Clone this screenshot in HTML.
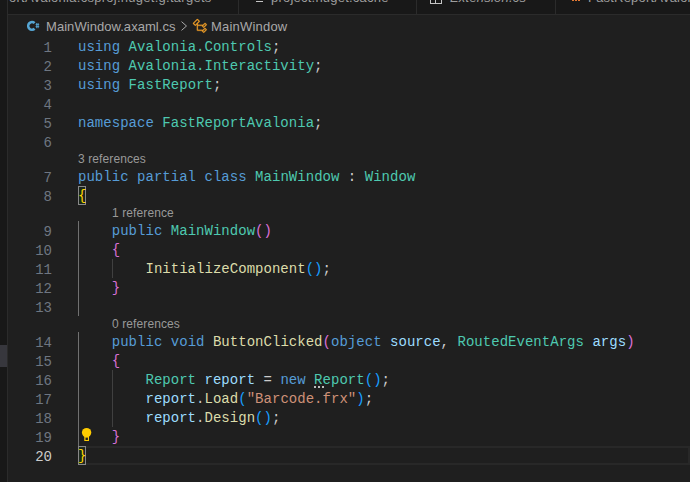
<!DOCTYPE html>
<html><head><meta charset="utf-8">
<style>
*{margin:0;padding:0;box-sizing:border-box}
html,body{width:690px;height:482px;overflow:hidden;background:#1f1f1f}
body{position:relative;font-family:"Liberation Sans",sans-serif}
.abs{position:absolute}
#side{left:0;top:0;width:7px;height:482px;background:#181818}
#sideb{left:7px;top:0;width:1px;height:482px;background:#2b2b2b}
#slider{left:0;top:345px;width:7px;height:22px;background:#37373d}
#tabs{left:8px;top:-21px;width:682px;height:36px;background:#181818;border-bottom:1px solid #2b2b2b}
.tab{position:absolute;top:0;height:35px;white-space:nowrap;font-size:13px;color:#9d9d9d;line-height:35px}
.tsep{position:absolute;top:0;width:1px;height:35px;background:#2b2b2b}
#bc{left:8px;top:15px;width:682px;height:22px;font-size:13px;color:#a9a9a9;line-height:22px;white-space:nowrap}
.ln{position:absolute;left:8px;padding-top:2px;width:44px;text-align:right;font-family:"Liberation Mono",monospace;font-size:14px;line-height:19px;height:19px;color:#6e7681}
.cl{position:absolute;left:78px;padding-top:1px;letter-spacing:0.03px;width:612px;height:19px;font-family:"Liberation Mono",monospace;font-size:14px;line-height:19px;white-space:pre;color:#cccccc}
.lens{position:absolute;letter-spacing:0.1px;font-size:12px;line-height:16px;height:16px;color:#999999;white-space:nowrap}
.k{color:#569cd6}.t{color:#4ec9b0}.f{color:#dcdcaa}.v{color:#9cdcfe}.s{color:#ce9178}.p{color:#cccccc}
.b1{color:#ffd700}.b2{color:#da70d6}.b3{color:#179fff}
.guide{position:absolute;width:1px;background:#404040}
</style></head><body>
<div id="side" class="abs"></div>
<div id="slider" class="abs"></div>
<div id="sideb" class="abs"></div>

<div id="tabs" class="abs">
  <div class="tab" style="left:1px;top:1px;letter-spacing:0.27px">ortAvalonia.csproj.nuget.g.targets</div>
  <div class="tsep" style="left:230px"></div>
  <div class="abs" style="left:248px;top:20px;width:7px;height:1px;background:#8a8a8a"></div>
  <div class="abs" style="left:248px;top:22px;width:7px;height:1px;background:#c5c5c5"></div>
  <div class="tab" style="left:263px;top:1px;letter-spacing:0.22px">project.nuget.cache</div>
  <div class="tsep" style="left:408px"></div>
  <div class="abs" style="left:422px;top:13px;width:12px;height:12px;border:1px solid #c5c5c5;border-top:none"></div>
  <div class="abs" style="left:427px;top:13px;width:1px;height:11px;background:#c5c5c5"></div>
  <div class="tab" style="left:442px;top:1px;font-style:italic;letter-spacing:0.2px">Extension.cs</div>
  <div class="tsep" style="left:547px"></div>
  <div class="abs" style="left:564px;top:19px;width:2px;height:3px;background:#e37933"></div>
  <div class="abs" style="left:567px;top:19px;width:2px;height:3px;background:#e37933"></div>
  <div class="abs" style="left:570px;top:19px;width:2px;height:3px;background:#e37933"></div>
  <div class="tab" style="left:580px;top:1px;letter-spacing:0.2px">FastReportAvalonia.csproj</div>
</div>

<div id="bc" class="abs">
  <svg class="abs" style="left:19px;top:5px" width="14" height="12" viewBox="0 0 14 12">
    <path d="M7.6 3.1 A3.8 3.8 0 1 0 7.6 8.7" fill="none" stroke="#56a6d4" stroke-width="2.6"/>
    <path d="M9.7 3v5.2M11.1 3v5.2M8.6 4.6h3.6M8.6 6.6h3.6" stroke="#56a6d4" stroke-width="0.9"/>
  </svg>
  <span class="abs" style="left:38px;top:1px;letter-spacing:0.05px">MainWindow.axaml.cs</span>
  <svg class="abs" style="left:172px;top:5px" width="8" height="12" viewBox="0 0 8 12">
    <path d="M1.5 1.6 L6.5 6 L1.5 10.4" fill="none" stroke="#a9a9a9" stroke-width="1"/>
  </svg>
  <svg class="abs" style="left:184px;top:3px" width="16" height="16" viewBox="0 0 16 16">
    <path fill="#ee9d28" stroke="#ee9d28" stroke-width="0.25" d="M11.34 9.71h.71l2.67-2.67v-.71L13.38 5h-.7l-1.82 1.81h-5V5.56l1.86-1.85V3l-2-2H5L1 5v.71l2 2h.71l1.14-1.15v5.79l.5.5H10v.52l1.33 1.34h.71l2.67-2.67v-.71L13.37 10h-.7l-1.86 1.850h-5v-4H10v.48l1.34 1.38zm1.69-3.65l.63.63-2 2-.63-.63 2-2zm0 5l.63.63-2 2-.63-.63 2-2zM3.35 6.65l-1.290-1.3 3.29-3.29 1.3 1.29-3.3 3.3z"/>
  </svg>
  <span class="abs" style="left:203px;top:1px;letter-spacing:0.2px">MainWindow</span>
</div>

<!-- line numbers -->
<div class="ln" style="top:37px">1</div>
<div class="ln" style="top:56px">2</div>
<div class="ln" style="top:75px">3</div>
<div class="ln" style="top:94px">4</div>
<div class="ln" style="top:113px">5</div>
<div class="ln" style="top:132px">6</div>
<div class="ln" style="top:167px">7</div>
<div class="ln" style="top:186px">8</div>
<div class="ln" style="top:221px">9</div>
<div class="ln" style="top:240px">10</div>
<div class="ln" style="top:259px">11</div>
<div class="ln" style="top:278px">12</div>
<div class="ln" style="top:297px">13</div>
<div class="ln" style="top:332px">14</div>
<div class="ln" style="top:351px">15</div>
<div class="ln" style="top:370px">16</div>
<div class="ln" style="top:389px">17</div>
<div class="ln" style="top:408px">18</div>
<div class="ln" style="top:427px">19</div>
<div class="ln" style="top:446px;color:#cccccc">20</div>

<!-- current line -->
<div class="abs" style="left:78px;top:446px;width:612px;height:19px;border:2px solid #282828"></div>

<!-- guides -->
<div class="guide" style="left:78px;top:221px;height:95px;background:#707070"></div>
<div class="guide" style="left:78px;top:332px;height:114px;background:#707070"></div>
<div class="guide" style="left:112px;top:259px;height:19px"></div>
<div class="guide" style="left:112px;top:370px;height:57px"></div>

<!-- bracket match boxes -->
<div class="abs" style="left:78px;top:186px;width:8px;height:19px;border:1px solid #888;background:rgba(0,100,0,0.1)"></div>
<div class="abs" style="left:78px;top:446px;width:8px;height:19px;border:1px solid #888;background:rgba(0,100,0,0.1)"></div>

<!-- lightbulb -->
<svg class="abs" style="left:80px;top:426px" width="12" height="16" viewBox="0 0 12 16">
  <circle cx="6.6" cy="6.6" r="4.7" fill="#ffcc00"/>
  <path fill="#ffcc00" fill-rule="evenodd" d="M4.3 9.8h4.7v5.3h-4.7z M5.5 11.6h2.4v2.4h-2.4z"/>
</svg>

<!-- code -->
<div class="cl" style="top:37px"><span class="k">using</span> <span class="t">Avalonia.Controls</span>;</div>
<div class="cl" style="top:56px"><span class="k">using</span> <span class="t">Avalonia.Interactivity</span>;</div>
<div class="cl" style="top:75px"><span class="k">using</span> <span class="t">FastReport</span>;</div>
<div class="cl" style="top:113px"><span class="k">namespace</span> <span class="t">FastReportAvalonia</span>;</div>
<div class="lens" style="left:78px;top:151px">3 references</div>
<div class="cl" style="top:167px"><span class="k">public</span> <span class="k">partial</span> <span class="k">class</span> <span class="t">MainWindow</span> : <span class="t">Window</span></div>
<div class="cl" style="top:186px"><span class="b1">{</span></div>
<div class="lens" style="left:112px;top:205px">1 reference</div>
<div class="cl" style="top:221px">    <span class="k">public</span> <span class="t">MainWindow</span><span class="b2">()</span></div>
<div class="cl" style="top:240px">    <span class="b2">{</span></div>
<div class="cl" style="top:259px">        <span class="f">InitializeComponent</span><span class="b3">()</span>;</div>
<div class="cl" style="top:278px">    <span class="b2">}</span></div>
<div class="lens" style="left:112px;top:316px">0 references</div>
<div class="cl" style="top:332px">    <span class="k">public</span> <span class="k">void</span> <span class="f">ButtonClicked</span><span class="b2">(</span><span class="k">object</span> <span class="v">source</span>, <span class="t">RoutedEventArgs</span> <span class="v">args</span><span class="b2">)</span></div>
<div class="cl" style="top:351px">    <span class="b2">{</span></div>
<div class="cl" style="top:370px">        <span class="t">Report</span> <span class="v">report</span> = <span class="k">new</span> <span class="t">Report</span><span class="b3">()</span>;</div>
<div class="cl" style="top:389px">        <span class="v">report</span>.<span class="f">Load</span><span class="b3">(</span><span class="s">"Barcode.frx"</span><span class="b3">)</span>;</div>
<div class="cl" style="top:408px">        <span class="v">report</span>.<span class="f">Design</span><span class="b3">()</span>;</div>
<div class="cl" style="top:427px">    <span class="b2">}</span></div>
<div class="cl" style="top:446px"><span class="b1">}</span></div>

<!-- hint dots -->
<div class="abs" style="left:314px;top:386px;width:2px;height:2px;background:#bdbdbd"></div>
<div class="abs" style="left:318px;top:386px;width:2px;height:2px;background:#bdbdbd"></div>
<div class="abs" style="left:322px;top:386px;width:2px;height:2px;background:#bdbdbd"></div>

</body></html>
